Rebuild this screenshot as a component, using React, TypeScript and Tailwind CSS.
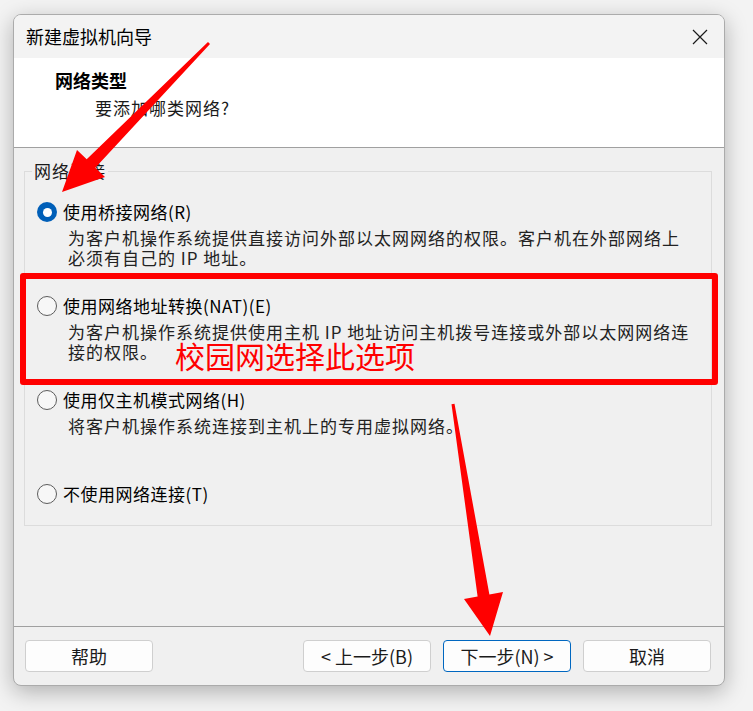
const font = { fontFamily: '"Noto Sans CJK SC", "Microsoft YaHei", sans-serif' };

type Option = { label: string; desc: string[]; checked?: boolean };

const options: Option[] = [
  {
    label: '使用桥接网络(R)',
    desc: ['为客户机操作系统提供直接访问外部以太网网络的权限。客户机在外部网络上', '必须有自己的 IP 地址。'],
    checked: true,
  },
  {
    label: '使用网络地址转换(NAT)(E)',
    desc: ['为客户机操作系统提供使用主机 IP 地址访问主机拨号连接或外部以太网网络连', '接的权限。'],
  },
  {
    label: '使用仅主机模式网络(H)',
    desc: ['将客户机操作系统连接到主机上的专用虚拟网络。'],
  },
  { label: '不使用网络连接(T)', desc: [] },
];

const Radio = ({ checked }: { checked?: boolean }) =>
  checked ? (
    <span className="flex h-[20px] w-[20px] shrink-0 items-center justify-center rounded-full bg-[#005fb8]">
      <span className="h-[9px] w-[9px] rounded-full bg-white" />
    </span>
  ) : (
    <span className="h-[20px] w-[20px] shrink-0 rounded-full border border-[#5c5c5c] bg-[#f7f7f7]" />
  );

const Btn = ({ children, primary }: { children: React.ReactNode; primary?: boolean }) => (
  <button
    className={
      primary
        ? 'flex h-[32px] w-[128px] items-center justify-center rounded-[4px] border border-[#0067c0] bg-[#fdfdfd] text-[18px] text-[#1a1a1a]'
        : 'flex h-[32px] w-[128px] items-center justify-center rounded-[4px] border border-[#cfcfcf] bg-[#fdfdfd] text-[18px] text-[#1a1a1a]'
    }
  >
    {children}
  </button>
);

export default function App() {
  return (
    <div className="relative h-[711px] w-[753px] overflow-hidden bg-[#f3f3f3] pl-[13px] pt-[14px]" style={font}>
      <div className="flex h-[672px] w-[712px] flex-col overflow-hidden rounded-[8px] border border-[#ababab] bg-[#f0f0f0] shadow-[0_6px_22px_rgba(0,0,0,0.28)]">
        {/* title bar */}
        <div className="flex h-[43px] items-center justify-between bg-[#f3f3f3] pl-[12px] pr-[16px]">
          <span className="text-[18px] text-black">新建虚拟机向导</span>
          <svg width="16" height="16" viewBox="0 0 16 16">
            <path d="M1 1 L15 15 M15 1 L1 15" stroke="#1a1a1a" strokeWidth="1.2" />
          </svg>
        </div>

        {/* header */}
        <div className="h-[90px] border-b border-[#a0a0a0] bg-white pt-[11px]">
          <div className="pl-[41px] text-[18px] leading-[22px] font-bold text-black">网络类型</div>
          <div className="mt-[6px] pl-[81px] text-[17px] leading-[22px] tracking-[1px] text-[#1a1a1a]">要添加哪类网络?</div>
        </div>

        {/* body */}
        <div className="h-[478px] pl-[10px] pr-[12px] pt-[13px]">
          <fieldset className="border border-[#dcdcdc] px-[12px] pb-[20px] pt-[20px]">
            <legend className="ml-[-5px] px-[2px] text-[17px] leading-[20px] tracking-[1px] text-[#1a1a1a]">网络连接</legend>
            <div className="flex flex-col gap-[27px]">
              {options.map((o) => (
                <div key={o.label}>
                  <div className="flex h-[22px] items-center gap-[6px]">
                    <Radio checked={o.checked} />
                    <span className="text-[17px] leading-[22px] tracking-[0.5px] text-black">{o.label}</span>
                  </div>
                  {o.desc.length > 0 && (
                    <div className="mt-[5px] min-h-[40px] pl-[31px] text-[17px] leading-[20px] tracking-[1px] text-[#222]">
                      {o.desc.map((d) => (
                        <div key={d} className="whitespace-nowrap">
                          {d}
                        </div>
                      ))}
                    </div>
                  )}
                </div>
              ))}
            </div>
          </fieldset>
        </div>

        {/* footer */}
        <div className="flex flex-1 items-start justify-between border-t border-[#a0a0a0] pl-[11px] pr-[13px] pt-[13px]">
          <Btn>帮助</Btn>
          <div className="flex gap-[12px]">
            <Btn>&lt; 上一步(B)</Btn>
            <Btn primary>下一步(N) &gt;</Btn>
            <Btn>取消</Btn>
          </div>
        </div>
      </div>

      {/* annotations */}
      <div className="absolute left-[20px] top-[273px] h-[112px] w-[698px] rounded-[3px] border-[6px] border-[#ff0000]" />
      <div className="absolute left-[175px] top-[339px] text-[30px] leading-[32px] text-[#ff0000]">校园网选择此选项</div>
      <svg className="pointer-events-none absolute left-0 top-0" width="753" height="711">
        <polygon
          points="208,42 86.7,159.3 77,150 62,192 105,177 95.3,167.7 210,44"
          fill="#ff0000"
        />
        <polygon
          points="451.5,404.2 477.6,596.4 464,599 490,636 503,592 489.4,594.6 454.5,403.8"
          fill="#ff0000"
        />
      </svg>
    </div>
  );
}
